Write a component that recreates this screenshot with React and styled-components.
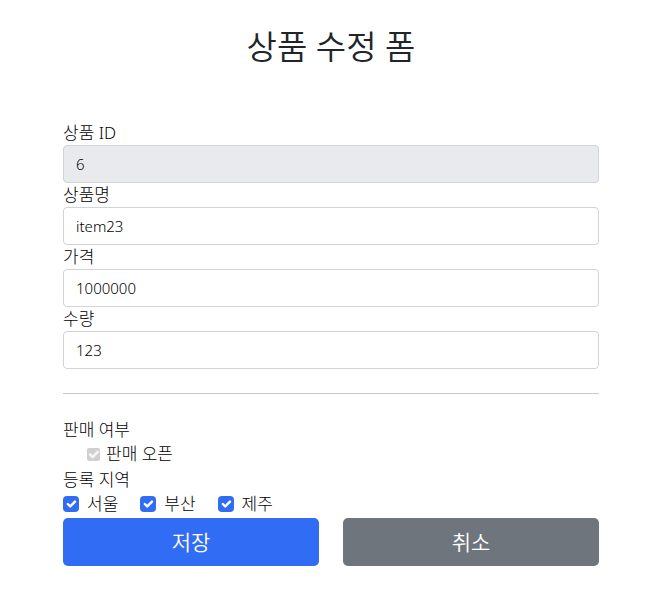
import { useState } from "react";
import styled, { createGlobalStyle } from "styled-components";

const regionList = [
  { value: "SEOUL", label: "서울" },
  { value: "BUSAN", label: "부산" },
  { value: "JEJU", label: "제주" },
];

function App() {
  // form field values
  const [itemName, setItemName] = useState("item23");
  const [price, setPrice] = useState("1000000");
  const [quantity, setQuantity] = useState("123");
  const [regions, setRegions] = useState(["SEOUL", "BUSAN", "JEJU"]);

  const toggleRegion = (value) => {
    setRegions((prev) =>
      prev.includes(value) ? prev.filter((r) => r !== value) : [...prev, value]
    );
  };

  const handleSubmit = (e) => {
    e.preventDefault();
  };

  return (
    <>
      <GlobalStyle />
      <Container>
        <Title>상품 수정 폼</Title>
        <form onSubmit={handleSubmit}>
          <Label htmlFor="id">상품 ID</Label>
          <TextInput id="id" type="text" value="6" readOnly $muted />

          <Label htmlFor="itemName">상품명</Label>
          <TextInput
            id="itemName"
            type="text"
            onChange={(e) => setItemName(e.target.value)}
            value={itemName}
          />

          <Label htmlFor="price">가격</Label>
          <TextInput
            id="price"
            type="text"
            onChange={(e) => setPrice(e.target.value)}
            value={price}
          />

          <Label htmlFor="quantity">수량</Label>
          <TextInput
            id="quantity"
            type="text"
            onChange={(e) => setQuantity(e.target.value)}
            value={quantity}
          />

          <Divider />

          <Group>
            <Legend>판매 여부</Legend>
            <CheckRow $indent>
              <CheckLabel $gap={6}>
                <Checkbox type="checkbox" checked disabled readOnly />
                판매 오픈
              </CheckLabel>
            </CheckRow>
          </Group>

          <Group>
            <Legend>등록 지역</Legend>
            <CheckRow>
              {regionList.map((region) => (
                <CheckLabel key={region.value} $gap={8}>
                  <Checkbox
                    type="checkbox"
                    checked={regions.includes(region.value)}
                    onChange={() => toggleRegion(region.value)}
                  />
                  {region.label}
                </CheckLabel>
              ))}
            </CheckRow>
          </Group>

          <Buttons>
            <Button type="submit" $primary>
              저장
            </Button>
            <Button type="button">취소</Button>
          </Buttons>
        </form>
      </Container>
    </>
  );
}

export default App;

const GlobalStyle = createGlobalStyle`
  *, *::before, *::after {
    box-sizing: border-box;
  }

  body {
    margin: 0;
    padding-right: 7px;
    background: #fff;
    color: #000;
    font-family: "Noto Sans", "Noto Sans CJK KR", sans-serif;
    font-size: 17px;
    font-weight: 300;
    line-height: 24px;
  }
`;

const Container = styled.main`
  max-width: 560px;
  margin: 0 auto;
  padding: 28px 12px 40px;
`;

const Title = styled.h2`
  margin: 0 0 55px;
  color: #212529;
  font-size: 33px;
  font-weight: 350;
  line-height: 38px;
  text-align: center;
`;

const Label = styled.label`
  display: block;
`;

const TextInput = styled.input`
  display: block;
  width: 100%;
  height: 38px;
  padding: 6px 12px;
  border: 1px solid #ced4da;
  border-radius: 4px;
  background: ${(props) => (props.$muted ? "#e9eaee" : "#fff")};
  color: #000;
  font-family: inherit;
  font-size: 15px;
  font-weight: 350;
`;

const Divider = styled.hr`
  height: 1px;
  margin: 24px 0;
  border: 0;
  background: #c8c9ca;
`;

const Group = styled.fieldset`
  min-width: 0;
  margin: 0;
  padding: 0;
  border: 0;
`;

const Legend = styled.legend`
  padding: 0;
`;

const CheckRow = styled.div`
  display: flex;
  gap: 22px;
  margin-bottom: 2px;
  padding-left: ${(props) => (props.$indent ? "24px" : "0")};
`;

const CheckLabel = styled.label`
  display: flex;
  align-items: center;
  gap: ${(props) => props.$gap}px;
`;

const tick = (color) =>
  `url("data:image/svg+xml,%3csvg xmlns='http://www.w3.org/2000/svg' viewBox='0 0 20 20'%3e%3cpath fill='none' stroke='${color}' stroke-linecap='round' stroke-linejoin='round' stroke-width='3' d='M6 10l3 3l6-6'/%3e%3c/svg%3e")`;

const Checkbox = styled.input`
  appearance: none;
  flex: none;
  width: 16px;
  height: 16px;
  margin: 0;
  border: 1px solid #bfbfbf;
  border-radius: 4px;

  &:checked {
    border: 0;
    background: #316cf4 ${tick("%23fff")} center / 16px no-repeat;
  }

  &:disabled {
    width: 13px;
    height: 13px;
    border-radius: 2px;
    background: #d0d0d0 ${tick("%23f6f6f6")} center / 17px no-repeat;
  }
`;

const Buttons = styled.div`
  display: grid;
  grid-template-columns: 1fr 1fr;
  gap: 24px;
`;

const Button = styled.button`
  height: 48px;
  padding: 8px 16px;
  border: 0;
  border-radius: 5px;
  background: ${(props) => (props.$primary ? "#316cf4" : "#6e757c")};
  color: #fff;
  font-family: inherit;
  font-size: 21px;
  font-weight: 350;
  line-height: 30px;
  cursor: pointer;
`;
